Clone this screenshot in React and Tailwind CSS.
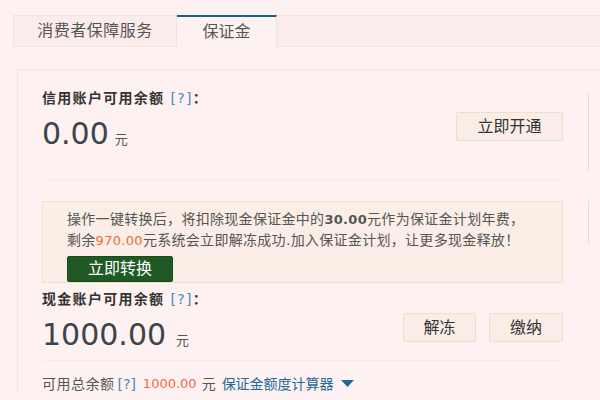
import React from 'react';

const FONT = { fontFamily: '"DejaVu Sans", "Noto Sans CJK SC", sans-serif' };

function Help() {
  return <span className="text-[#4a8ab8] font-normal">[?]</span>;
}

function LightButton({ children, width }) {
  return (
    <button
      className={`h-[29px] ${width} rounded-[2px] border border-[#efdfca] bg-[#faece7] text-[16px] text-[#333] leading-none`}
    >
      {children}
    </button>
  );
}

export default function App() {
  return (
    <div className="w-[600px] h-[400px] overflow-hidden bg-[#fdf1f1] pt-[15px] pl-[13px]" style={FONT}>
      {/* Tabs */}
      <div className="flex h-[32px] border-y border-[#f3e4dc] bg-[#fbecec]">
        <div className="w-[164px] border-l border-r border-[#f3e4dc] flex items-center justify-center text-[16px] text-[#555] tracking-[0.5px]">
          消费者保障服务
        </div>
        <div className="w-[100px] -mt-px -mb-px border-t-2 border-t-[#1a5e94] border-r border-r-[#f3e4dc] bg-[#fdf1f1] flex items-center justify-center text-[16px] text-[#555]">
          保证金
        </div>
        <div className="flex-1" />
      </div>

      {/* Panel */}
      <div className="mt-[22px] ml-[4px] border-l border-t border-[#f3e4dc] flex">
        <div className="ml-[24px] w-[521px] flex flex-col">
          {/* Credit account */}
          <div className="h-[111px] border-b border-[#fbe9e9] flex justify-between">
            <div className="pt-[18px]">
              <div className="text-[14px] leading-[20px] font-bold text-[#333] tracking-[1.3px]">
                信用账户可用余额 <Help />：
              </div>
              <div className="mt-[8px] flex items-baseline text-[#3d454b]">
                <span className="text-[30px] leading-[36px]">0.00</span>
                <span className="ml-[6px] text-[13px] text-[#555]">元</span>
              </div>
            </div>
            <div className="pt-[42px]">
              <LightButton width="w-[107px]">立即开通</LightButton>
            </div>
          </div>

          {/* Notice */}
          <div className="mt-[20px] h-[82px] border border-[#efe2c4] bg-[#faeee6] pl-[24px] pt-[7px]">
            <div className="text-[14px] leading-[20px] text-[#555] tracking-[0.3px]">
              操作一键转换后，将扣除现金保证金中的<span className="font-bold text-[13px]">30.00</span>元作为保证金计划年费，
            </div>
            <div className="text-[14px] leading-[20px] text-[#555] tracking-[0.3px]">
              剩余<span className="text-[#f26a3b] text-[13px]">970.00</span>元系统会立即解冻成功.加入保证金计划，让更多现金释放！
            </div>
            <button className="mt-[5px] w-[106px] h-[26px] rounded-[2px] border border-[#174a1c] bg-[#1f5a25] text-white text-[16px] leading-none">
              立即转换
            </button>
          </div>

          {/* Cash account */}
          <div className="h-[78px] border-b border-[#fbe9e9] flex justify-between">
            <div className="pt-[6px]">
              <div className="text-[14px] leading-[20px] font-bold text-[#333] tracking-[1.3px]">
                现金账户可用余额 <Help />：
              </div>
              <div className="mt-[8px] flex items-baseline text-[#3d454b]">
                <span className="text-[30px] leading-[36px]">1000.00</span>
                <span className="ml-[10px] text-[13px] text-[#555]">元</span>
              </div>
            </div>
            <div className="pt-[30px] flex gap-[13px]">
              <LightButton width="w-[73px]">解冻</LightButton>
              <LightButton width="w-[74px]">缴纳</LightButton>
            </div>
          </div>

          {/* Total */}
          <div className="mt-[13px] flex items-center text-[14px] leading-[20px] text-[#555]">
            <span className="tracking-[0.5px]">可用总余额</span>
            <span className="ml-[3px] text-[#4a8ab8]">[?]</span>
            <span className="ml-[7px] text-[13px] text-[#f0694e]">1000.00</span>
            <span className="ml-[5px]">元</span>
            <span className="ml-[6px] text-[#1e6b96]">保证金额度计算器</span>
            <svg className="ml-[7px]" width="13" height="8" viewBox="0 0 13 8">
              <path d="M0 0 H13 L6.5 7 Z" fill="#1e6b96" />
            </svg>
          </div>
        </div>

        {/* Right column edge */}
        <div className="ml-[25px] flex flex-col">
          <div className="mt-[24px] h-[77px] border-l border-[#e8dcc4]" />
          <div className="mt-[30px] h-[43px] border-l border-[#e8dcc4]" />
        </div>
      </div>
    </div>
  );
}
